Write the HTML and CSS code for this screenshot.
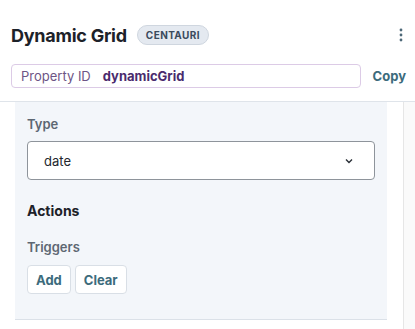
FILE: index.html
```html
<!DOCTYPE html>
<html>
<head>
<meta charset="utf-8">
<link rel="stylesheet" href="styles.css">
</head>
<body>
<div class="header">
  <div class="title-row">
    <h1 class="title">Dynamic Grid</h1>
    <span class="badge">CENTAURI</span>
    <span class="kebab"><svg width="4" height="14" viewBox="0 0 4 14"><circle cx="2" cy="2" r="1.4"/><circle cx="2" cy="7" r="1.4"/><circle cx="2" cy="12" r="1.4"/></svg></span>
  </div>
  <div class="prop-row">
    <div class="prop-field"><span class="prop-label">Property ID</span><span class="prop-value">dynamicGrid</span></div>
    <span class="copy">Copy</span>
  </div>
</div>
<div class="main">
  <div class="panel">
    <div class="label">Type</div>
    <div class="select"><span>date</span><svg width="8" height="6" viewBox="0 0 8 6"><path d="M1 1.5l3 3 3-3" fill="none" stroke="#2a2f36" stroke-width="1.4"/></svg></div>
    <div class="section">Actions</div>
    <div class="label sub">Triggers</div>
    <div class="buttons"><span class="btn">Add</span><span class="btn">Clear</span></div>
  </div>
  <div class="track"></div>
</div>
</body>
</html>
```
FILE: styles.css
```css
* { box-sizing: border-box; }
html, body { margin: 0; padding: 0; background: #fff; }
body { font-family: Inter, "Noto Sans", sans-serif; width: 415px; height: 329px; overflow: hidden; }
.header { padding: 22px 9px 13px 11px; border-bottom: 1px solid #dfe4ea; }
.title-row { display: flex; align-items: center; height: 26px; }
.title { margin: 0; font-size: 18px; font-weight: 700; color: #1d2229; letter-spacing: -0.25px; }
.badge { margin-left: 10px; height: 20px; padding: 0 8px; border-radius: 10px; background: #e4e9f0; border: 1px solid #cfd6df; font-size: 10px; font-weight: 700; color: #3b4a5c; letter-spacing: 0.4px; display: flex; align-items: center; }
.kebab { margin-left: auto; margin-right: 3px; display: flex; fill: #4d6878; }
.prop-row { display: flex; align-items: center; margin-top: 16px; }
.prop-field { width: 350px; height: 24px; border: 1px solid #dccbe6; border-radius: 4px; display: flex; align-items: center; padding-left: 9px; font-size: 13px; }
.prop-label { color: #6d5585; }
.prop-value { margin-left: 12px; color: #4a2b6d; font-weight: 700; }
.copy { margin-left: 12px; font-size: 13px; font-weight: 700; color: #3c6b7c; }
.main { display: flex; height: 227px; }
.panel { margin-left: 15px; width: 372px; height: 218px; background: #f3f6fa; border-bottom: 1px solid #dbe1e8; padding: 14px 12px 0 12px; }
.label { font-size: 13px; line-height: 16px; font-weight: 600; color: #5d6772; }
.select { margin-top: 9px; height: 39px; background: #fff; border: 1px solid #8e949b; border-radius: 4px; display: flex; align-items: center; justify-content: space-between; padding: 0 21px 0 16px; font-size: 13px; color: #22272e; }
.section { margin-top: 22px; font-size: 14px; line-height: 18px; font-weight: 700; color: #1d2229; }
.sub { margin-top: 19px; }
.buttons { display: flex; gap: 4px; margin-top: 10px; }
.btn { height: 29px; padding: 0 8px; background: #fff; border: 1px solid #d9dfe6; border-radius: 4px; font-size: 13px; font-weight: 700; color: #3c6b7c; display: flex; align-items: center; }
.track { margin-left: 16px; width: 12px; border-left: 1px solid #e6e6e6; background: #fafafa; }
```
